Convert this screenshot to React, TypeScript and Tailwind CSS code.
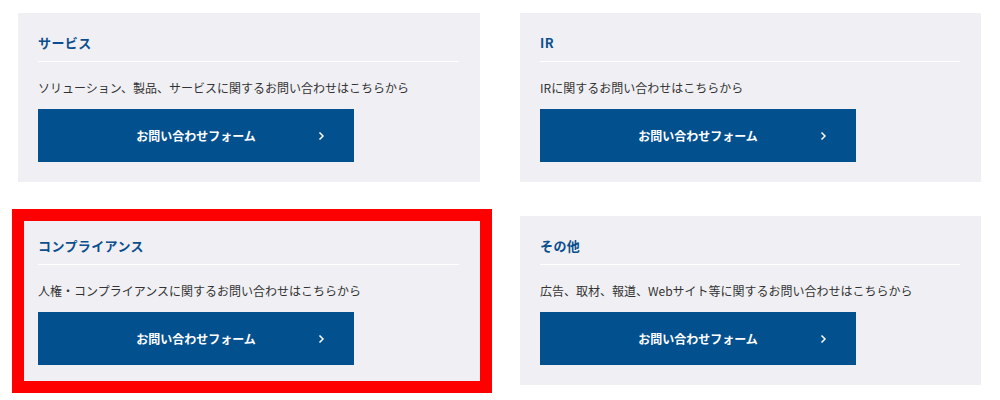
const cards = [
  { title: "サービス", desc: "ソリューション、製品、サービスに関するお問い合わせはこちらから" },
  { title: "IR", desc: "IRに関するお問い合わせはこちらから" },
  { title: "コンプライアンス", desc: "人権・コンプライアンスに関するお問い合わせはこちらから", marked: true },
  { title: "その他", desc: "広告、取材、報道、Webサイト等に関するお問い合わせはこちらから" },
];

function Card({ title, desc, marked }: { title: string; desc: string; marked?: boolean }) {
  return (
    <div className="relative bg-[#f0f0f4] pt-5 pb-5 pl-5 pr-[21px]">
      <h3 className="text-[13px] leading-5 font-bold tracking-[0.03em] text-[#0b4e8e]">{title}</h3>
      <div className="mt-2 h-px bg-white" />
      <p className="mt-4 text-[12px] leading-5 text-[#333]">{desc}</p>
      <a
        href="#"
        className="relative mt-[11px] flex h-[53px] w-[316px] items-center justify-center bg-[#03508f] text-[12px] font-bold text-white"
      >
        お問い合わせフォーム
        <svg
          className="absolute right-[29px] top-1/2 -translate-y-1/2"
          width="7"
          height="10"
          viewBox="0 0 7 10"
          fill="none"
        >
          <path d="M1.5 1.5 L5 5 L1.5 8.5" stroke="white" strokeWidth="1.5" />
        </svg>
      </a>
      {marked && (
        <div className="pointer-events-none absolute -left-[6px] -top-[7px] h-[184px] w-[480px] border-[12px] border-[#ff0000]" />
      )}
    </div>
  );
}

export default function App() {
  return (
    <div
      className="min-h-[400px] w-[1000px] bg-white pt-[13px] pl-[18px]"
      style={{ fontFamily: '"Noto Sans CJK JP", "Noto Sans", sans-serif' }}
    >
      <div className="grid w-[963px] grid-cols-[462px_461px] gap-x-10 gap-y-[34px]">
        {cards.map((c) => (
          <Card key={c.title} {...c} />
        ))}
      </div>
    </div>
  );
}
